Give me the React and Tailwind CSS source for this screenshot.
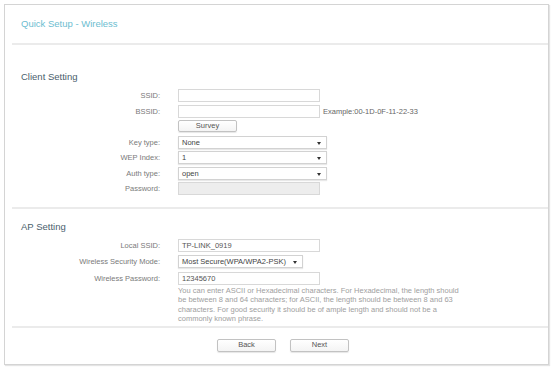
import React from "react";

const font = { fontFamily: '"Liberation Sans", Arial, sans-serif' };

function Arrow() {
  return (
    <svg width="4" height="3" viewBox="0 0 4 3" className="absolute right-[5px] top-[5px]">
      <path d="M0 0 L4 0 L2 3 Z" fill="#333" />
    </svg>
  );
}

function Label({ children }) {
  return (
    <div className="w-[155px] shrink-0 text-right text-[7.5px] leading-[13px] text-[#7a7a7a]">
      {children}
    </div>
  );
}

function Input({ value = "", disabled = false, w = "w-[142px]" }) {
  return (
    <div
      className={`${w} h-[13px] border border-[#d8d8d8] px-[3px] text-[7.5px] leading-[11px] text-[#555] ${
        disabled ? "bg-[#ededed]" : "bg-white"
      }`}
    >
      {value}
    </div>
  );
}

function Select({ value, w = "w-[149px]" }) {
  return (
    <div
      className={`${w} relative h-[13px] border border-[#d2d2d2] bg-white px-[3px] text-[7.5px] leading-[11px] text-[#444] shadow-[0_1px_1px_#e8e8e8]`}
    >
      {value}
      <Arrow />
    </div>
  );
}

function Button({ children, w = "w-[59px]", h = "h-[13px]" }) {
  return (
    <div
      className={`${w} ${h} flex items-center justify-center rounded-[2px] border border-[#c2c2c2] bg-gradient-to-b from-white to-[#f4f4f4] text-[7.5px] text-[#555] shadow-[0_1px_1px_#e6e6e6]`}
    >
      {children}
    </div>
  );
}

function Row({ label, children, h = "h-[15.5px]" }) {
  return (
    <div className={`flex ${h} items-start`}>
      <Label>{label}</Label>
      <div className="ml-[18px] flex items-start">{children}</div>
    </div>
  );
}

export default function App() {
  return (
    <div className="h-[369px] w-[554px] overflow-hidden bg-white pl-[4px] pt-[4px]" style={font}>
      <div className="box-border flex h-[361px] w-[545px] flex-col border border-[#d4d4d4] shadow-[1px_1px_1px_#e4e4e4]">
        <div className="flex h-[38px] items-center pl-[16px] text-[9.5px] text-[#6cbdd0]">
          Quick Setup - Wireless
        </div>
        <div className="ml-[7px] h-[2px] bg-[#ebebeb]" />

        <div className="mt-[26px] h-[12px] pl-[16px] text-[9.5px] leading-[12px] text-[#4a5e6c]">
          Client Setting
        </div>
        <div className="mt-[6px] flex flex-col">
          <Row label="SSID:">
            <Input />
          </Row>
          <Row label="BSSID:">
            <Input />
            <div className="ml-[3px] text-[7.5px] leading-[13px] text-[#666]">Example:00-1D-0F-11-22-33</div>
          </Row>
          <Row label="">
            <Button h="h-[12px]">Survey</Button>
          </Row>
          <Row label="Key type:">
            <Select value="None" />
          </Row>
          <Row label="WEP Index:">
            <Select value="1" />
          </Row>
          <Row label="Auth type:">
            <Select value="open" />
          </Row>
          <Row label="Password:">
            <Input disabled />
          </Row>
        </div>

        <div className="ml-[7px] mt-[9px] h-[2px] bg-[#ebebeb]" />

        <div className="mt-[12px] h-[12px] pl-[16px] text-[9.5px] leading-[12px] text-[#4a5e6c]">
          AP Setting
        </div>
        <div className="mt-[6px] flex flex-col">
          <Row label="Local SSID:" h="h-[16.5px]">
            <Input value="TP-LINK_0919" />
          </Row>
          <Row label="Wireless Security Mode:" h="h-[16.5px]">
            <Select value="Most Secure(WPA/WPA2-PSK)" w="w-[125px]" />
          </Row>
          <Row label="Wireless Password:" h="h-[14px]">
            <Input value="12345670" />
          </Row>
          <div className="ml-[173px] whitespace-nowrap text-[7.5px] leading-[9.5px] text-[#a0a0a0]">
            You can enter ASCII or Hexadecimal characters. For Hexadecimal, the length should
            <br />
            be between 8 and 64 characters; for ASCII, the length should be between 8 and 63
            <br />
            characters. For good security it should be of ample length and should not be a
            <br />
            commonly known phrase.
          </div>
        </div>

        <div className="ml-[7px] mt-[2px] h-[2px] bg-[#ebebeb]" />

        <div className="mt-[11px] flex justify-center gap-[14px] pl-[13px]">
          <Button>Back</Button>
          <Button>Next</Button>
        </div>
      </div>
    </div>
  );
}
